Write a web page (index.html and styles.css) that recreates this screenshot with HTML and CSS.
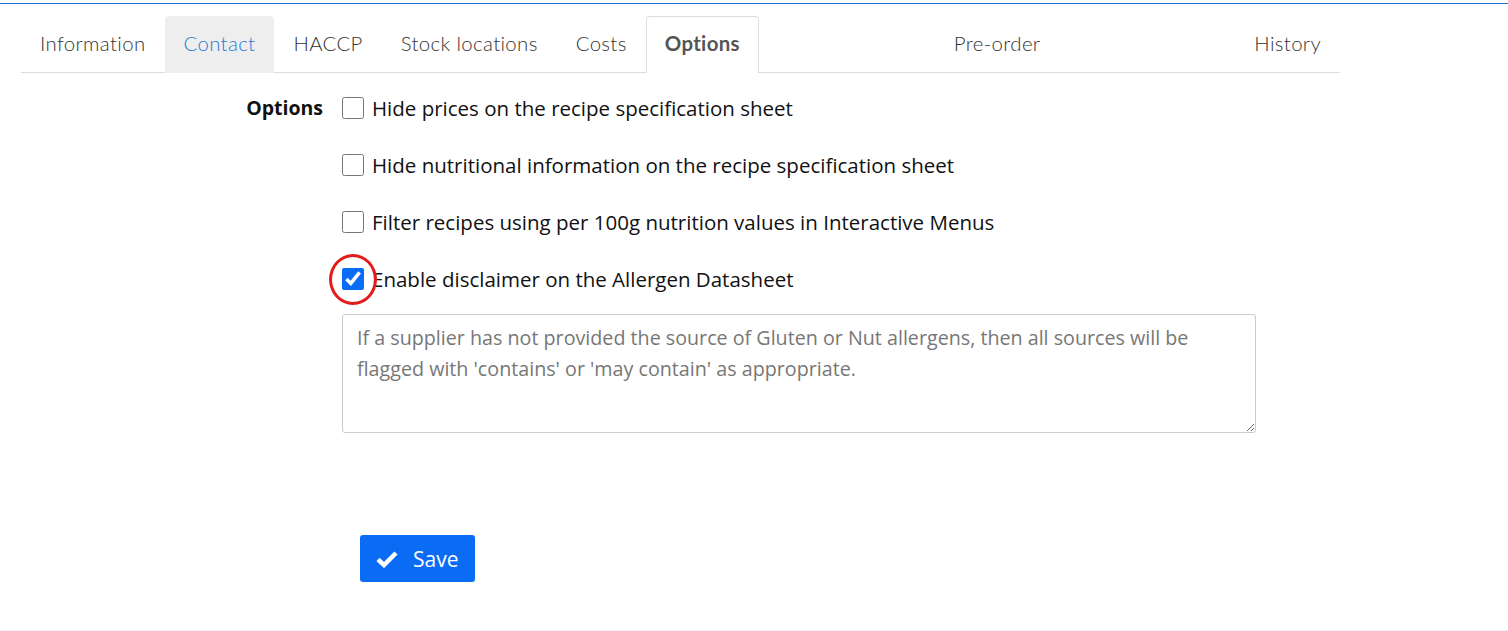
FILE: index.html
```html
<!DOCTYPE html>
<html lang="en">
<head>
  <meta charset="UTF-8">
  <title>Supplier options</title>
  <link rel="stylesheet" href="styles.css">
</head>
<body>
  <div class="topbar"></div>

  <!-- Tabs -->
  <ul class="tabs">
    <li class="tab">Information</li>
    <li class="tab hover">Contact</li>
    <li class="tab">HACCP</li>
    <li class="tab">Stock locations</li>
    <li class="tab">Costs</li>
    <li class="tab active">Options</li>
    <li class="tab wide">Pre-order</li>
    <li class="tab">History</li>
  </ul>

  <!-- Options form -->
  <div class="form">
    <div class="form-label">Options</div>
    <div class="form-fields">
      <label class="check"><input type="checkbox"> Hide prices on the recipe specification sheet</label>
      <label class="check"><input type="checkbox"> Hide nutritional information on the recipe specification sheet</label>
      <label class="check"><input type="checkbox"> Filter recipes using per 100g nutrition values in Interactive Menus</label>
      <label class="check marked"><input type="checkbox" checked> Enable disclaimer on the Allergen Datasheet</label>
      <textarea class="disclaimer">If a supplier has not provided the source of Gluten or Nut allergens, then all sources will be flagged with 'contains' or 'may contain' as appropriate.</textarea>
    </div>
  </div>

  <div class="actions">
    <button class="btn-save">
      <svg width="22" height="18" viewBox="0 0 22 18"><path d="M2 9.5 L8 15 L20 3" fill="none" stroke="#fff" stroke-width="4.5" stroke-linejoin="miter"/></svg>
      Save
    </button>
  </div>

  <div class="bottombar"></div>
</body>
</html>
```

FILE: styles.css
```css
body {
  margin: 0;
  font-family: "Open Sans", Arial, sans-serif;
  color: #111;
  background: white;
  height: 631px;
  position: relative;
}
.topbar {
  height: 1px;
  margin-top: 3px;
  background: #1a6fdc;
}
.tabs {
  list-style: none;
  margin: 12px 0 0 21px;
  padding: 0;
  width: 1319px;
  display: flex;
  border-bottom: 1px solid #ddd;
  height: 56px;
}
.tab {
  padding: 0 18px 4px;
  font-family: "Lato", sans-serif;
  font-size: 20.4px;
  font-weight: 300;
  letter-spacing: 0.35px;
  color: #333;
  display: flex;
  align-items: center;
  justify-content: center;
  border: 1px solid transparent;
  border-bottom: none;
  border-radius: 4px 4px 0 0;
  margin-bottom: -1px;
}
.tab.hover {
  background: #eee;
  color: #2a78d4;
}
.tab.active {
  border-color: #ddd;
  background: white;
  font-weight: 700;
  color: #555;
}
.tab.wide {
  flex: 1;
}
.form {
  display: grid;
  grid-template-columns: 323px 914px;
  column-gap: 19px;
  margin-top: 23px;
}
.form-label {
  text-align: right;
  font-weight: bold;
  font-size: 19.5px;
  line-height: 24px;
}
.form-fields {
  display: flex;
  flex-direction: column;
  gap: 33px;
}
.check {
  display: flex;
  align-items: center;
  gap: 8px;
  font-size: 20.5px;
  line-height: 24px;
  position: relative;
}
.check input {
  width: 22px;
  height: 22px;
  margin: 0;
  accent-color: #0a6cf5;
}
.marked::before {
  content: "";
  position: absolute;
  left: -13px;
  top: -13px;
  width: 42px;
  height: 45px;
  border: 3.5px solid #e31b1b;
  border-radius: 50%;
}
.disclaimer {
  margin-top: -10px;
  height: 119px;
  box-sizing: border-box;
  padding: 7px 14px;
  border: 1px solid #ccc;
  border-radius: 3px;
  font-family: "Open Sans", Arial, sans-serif;
  font-size: 19.7px;
  line-height: 31px;
  color: #777;
  resize: vertical;
}
.actions {
  margin: 102px 0 0 360px;
}
.btn-save {
  display: flex;
  align-items: center;
  gap: 15px;
  width: 115px;
  height: 47px;
  padding: 0 16px;
  border: none;
  border-radius: 3px;
  background: #0a6cf5;
  color: white;
  font-family: "Open Sans", Arial, sans-serif;
  font-size: 21px;
}
.bottombar {
  position: absolute;
  left: 0;
  right: 0;
  bottom: 0;
  height: 1px;
  background: #eee;
}
```
